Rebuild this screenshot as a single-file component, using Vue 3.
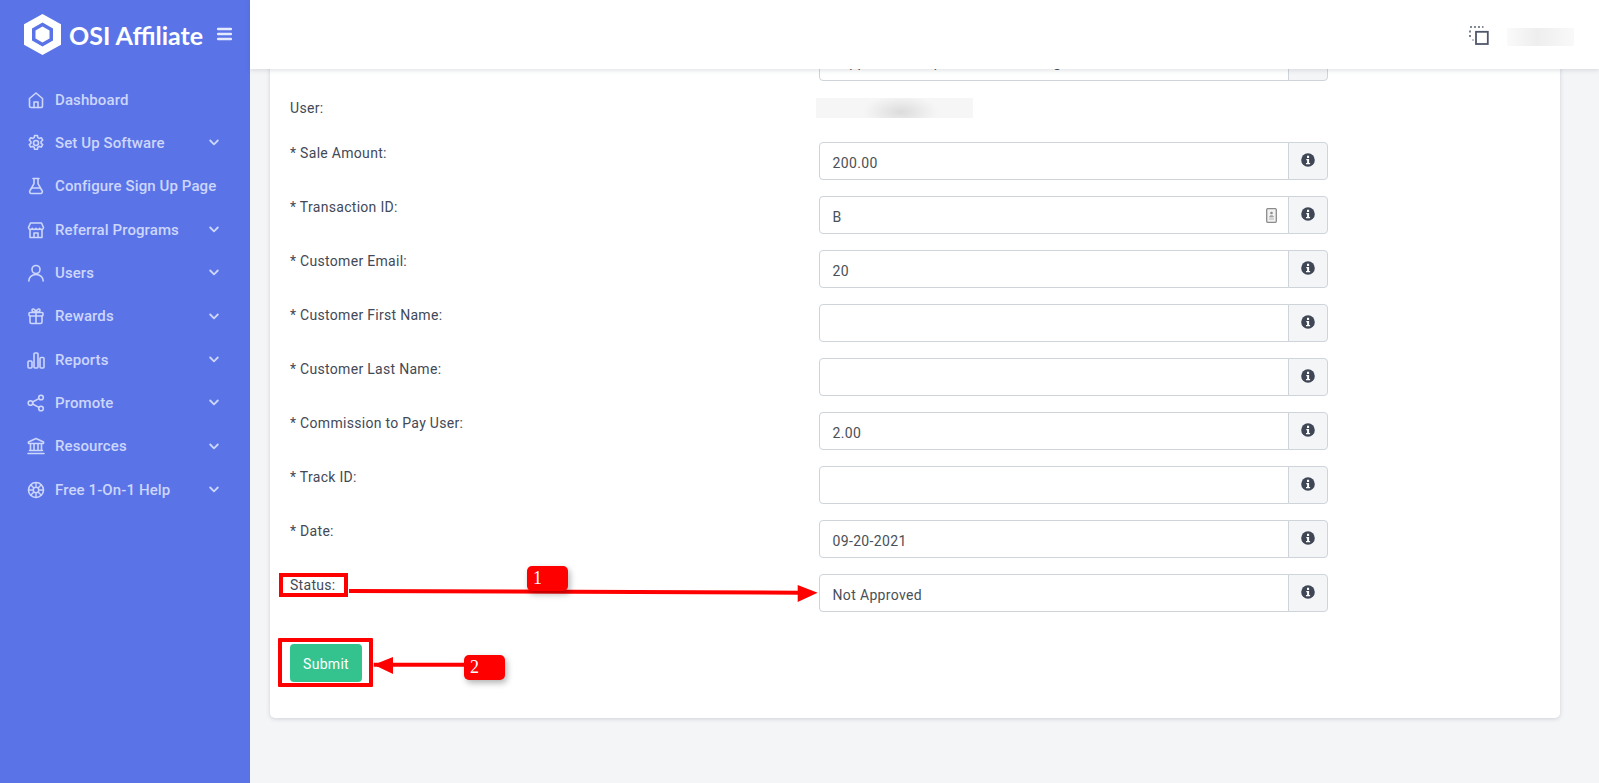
<script setup>
const menu = [
  { label: 'Dashboard', icon: 'home' },
  { label: 'Set Up Software', icon: 'gear', more: true },
  { label: 'Configure Sign Up Page', icon: 'flask' },
  { label: 'Referral Programs', icon: 'store', more: true },
  { label: 'Users', icon: 'user', more: true },
  { label: 'Rewards', icon: 'gift', more: true },
  { label: 'Reports', icon: 'bars', more: true },
  { label: 'Promote', icon: 'share', more: true },
  { label: 'Resources', icon: 'bank', more: true },
  { label: 'Free 1-On-1 Help', icon: 'help', more: true }
]
const rows = [
  { label: '* Sale Amount:', value: '200.00' },
  { label: '* Transaction ID:', value: 'B', contact: true },
  { label: '* Customer Email:', value: '20' },
  { label: '* Customer First Name:', value: '' },
  { label: '* Customer Last Name:', value: '' },
  { label: '* Commission to Pay User:', value: '2.00' },
  { label: '* Track ID:', value: '' },
  { label: '* Date:', value: '09-20-2021' }
]
</script>

<template>
  <div class="page">
    <aside class="sidebar">
      <div class="brand">
        <svg class="logo" viewBox="0 0 37 41" aria-hidden="true">
          <path fill="#fff" fill-rule="evenodd" d="M18.500 0 37 10.200v20.600L18.500 41 0 30.800V10.200ZM18.500 8.500 8 14.500v12l10.500 6 10.500-6v-12Z" />
          <path fill="#fff" d="M18.500 12.500 25.500 16.500v8L18.500 28.500 11.500 24.500v-8Z" />
        </svg>
        <span class="brand-name">OSI Affiliate</span>
        <svg class="burger" viewBox="0 0 15 14" aria-hidden="true">
          <path d="M1 2h13M1 7h13M1 12h13" stroke="currentColor" stroke-width="2.400" stroke-linecap="round" />
        </svg>
      </div>
      <nav class="menu">
        <a v-for="item in menu" :key="item.label" class="menu-item">
          <svg class="mi" viewBox="0 0 18 18" fill="none" stroke="currentColor" stroke-width="1.600" stroke-linecap="round" stroke-linejoin="round" aria-hidden="true">
            <template v-if="item.icon === 'home'">
              <path d="M2.500 7.500 9 2l6.500 5.500V15a1.500 1.500 0 0 1-1.500 1.500H4A1.500 1.500 0 0 1 2.500 15Z" />
              <path d="M7 16.500V11h4v5.500" />
            </template>
            <template v-else-if="item.icon === 'gear'">
              <circle cx="9" cy="9" r="2.500" />
              <path d="M7.600 1.500h2.800l.4 2.100 1.500.8 2-.7 1.400 2.400-1.600 1.400v1.800l1.600 1.400-1.400 2.400-2-.7-1.500.8-.4 2.100H7.600l-.4-2.100-1.500-.8-2 .7-1.400-2.400 1.600-1.400V7.500L2.300 6.100l1.400-2.400 2 .7 1.500-.8Z" />
            </template>
            <template v-else-if="item.icon === 'flask'">
              <path d="M6 1.500h6M7 1.500v5.200L2.800 14a1.700 1.700 0 0 0 1.500 2.500h9.400a1.700 1.700 0 0 0 1.500-2.500L11 6.700V1.500" />
              <path d="M5 11h8" />
            </template>
            <template v-else-if="item.icon === 'store'">
              <path d="M3.500 2h11l2 4.500a2 2 0 0 1-3.800.8 2.100 2.100 0 0 1-3.700 0 2.100 2.100 0 0 1-3.700 0 2 2 0 0 1-3.800-.8Z" />
              <path d="M3 9v7.500h12V9M7 16.500V12h4v4.500" />
            </template>
            <template v-else-if="item.icon === 'user'">
              <circle cx="9" cy="5.500" r="4" />
              <path d="M1.800 17c0-3.800 3-6.500 7.200-6.500s7.200 2.700 7.200 6.500" />
            </template>
            <template v-else-if="item.icon === 'gift'">
              <rect x="2" y="5.500" width="14" height="3.500" rx="1" />
              <path d="M3 9v6a1.500 1.500 0 0 0 1.500 1.500h9A1.500 1.500 0 0 0 15 15V9M9 5.500v11M9 5.500C7 5.500 5 4.500 5 3s3-2 4 2.500C10 1 13 1.500 13 3s-2 2.500-4 2.500Z" />
            </template>
            <template v-else-if="item.icon === 'bars'">
              <rect x="1" y="10" width="4" height="7" rx="1" />
              <rect x="7" y="2" width="4" height="15" rx="1" />
              <rect x="13" y="6.500" width="4" height="10.500" rx="1" />
            </template>
            <template v-else-if="item.icon === 'share'">
              <circle cx="3.500" cy="9" r="2.300" />
              <circle cx="14" cy="3.500" r="2.300" />
              <circle cx="14" cy="14.500" r="2.300" />
              <path d="m5.600 8 6.300-3.400M5.600 10l6.300 3.400" />
            </template>
            <template v-else-if="item.icon === 'bank'">
              <path d="M9 1.500 16.500 5v1.500h-15V5ZM3.500 7v6.500M7 7v6.500M11 7v6.500M14.500 7v6.500M2.500 13.500h13M1 16.500h16" />
            </template>
            <template v-else>
              <circle cx="9" cy="9" r="7.500" />
              <circle cx="9" cy="9" r="2.800" />
              <path d="M9 1.800v3.500M9 12.700v3.500M1.800 9h3.500M12.700 9h3.500M3.900 3.900l2.500 2.500M14.100 3.900l-2.500 2.500M3.900 14.100l2.500-2.500M14.100 14.100l-2.500-2.500" stroke-width="1.400" />
            </template>
          </svg>
          <span class="ml">{{ item.label }}</span>
          <svg v-if="item.more" class="chev" viewBox="0 0 10 7" aria-hidden="true">
            <path d="m1.200 1.500 3.800 3.800 3.800-3.800" fill="none" stroke="currentColor" stroke-width="1.800" stroke-linecap="round" stroke-linejoin="round" />
          </svg>
        </a>
      </nav>
    </aside>

    <div class="main">
      <header class="topbar">
        <svg class="screen" viewBox="0 0 20 19" aria-hidden="true">
          <path d="M1 1h2M5 1h2M9 1h2M13 1h1.500M1 4.500v2M1 9v2M1 13h.1M3.500 14h1" fill="none" stroke="#5b6172" stroke-width="1.600" />
          <rect x="7" y="5.800" width="11.800" height="12.200" fill="none" stroke="#50566a" stroke-width="1.800" />
        </svg>
        <div class="blur-wrap account"><div class="smudge"></div></div>
      </header>
      <div class="content">
        <section class="card">
          <div class="row clipped">
            <div class="label"></div>
            <div class="field">
              <div class="input"><span class="hidden-text">Support Desk Update Link Tracking</span></div>
              <div class="addon"></div>
            </div>
          </div>
          <div class="row user-row">
            <div class="label">User:</div>
            <div class="blur-wrap user-name"><div class="smudge"></div></div>
          </div>
          <div v-for="r in rows" :key="r.label" class="row">
            <div class="label">{{ r.label }}</div>
            <div class="field">
              <div class="input">
                <span class="value">{{ r.value }}</span>
                <svg v-if="r.contact" class="contact" viewBox="0 0 11 15" aria-hidden="true">
                  <rect x="0.700" y="0.700" width="9.600" height="13.600" rx="1" fill="#f2f2f2" stroke="#8b8b8b" stroke-width="1.300" />
                  <circle cx="5.500" cy="5" r="1.300" fill="#8b8b8b" />
                  <path d="M3.500 9c0-2 4-2 4 0ZM3 11h5" fill="#8b8b8b" stroke="#b5b5b5" />
                </svg>
              </div>
              <div class="addon">
                <svg class="info" viewBox="0 0 14 14" aria-hidden="true">
                  <circle cx="7" cy="7" r="6.800" fill="#3f4656" />
                  <path d="M6 2.800h2.100v2.100H6ZM5.300 5.900h2.800v4.100h1v1.300H5V10h1.100V7.200h-.8Z" fill="#fff" />
                </svg>
              </div>
            </div>
          </div>
          <div class="row status-row">
            <div class="label"><span class="status">Status:</span></div>
            <div class="field">
              <div class="input"><span class="value">Not Approved</span></div>
              <div class="addon">
                <svg class="info" viewBox="0 0 14 14" aria-hidden="true">
                  <circle cx="7" cy="7" r="6.800" fill="#3f4656" />
                  <path d="M6 2.800h2.100v2.100H6ZM5.300 5.900h2.800v4.100h1v1.300H5V10h1.100V7.200h-.8Z" fill="#fff" />
                </svg>
              </div>
            </div>
          </div>
          <div class="actions">
            <button class="submit" type="button">Submit</button>
          </div>
        </section>
      </div>

      <!-- Annotations painted over the page -->
      <svg class="marks" viewBox="0 0 1349 783" aria-hidden="true">
        <path d="M99 591 550 592.700" stroke="#f00" stroke-width="4" />
        <path d="M567.600 592.700 547.700 585v17Z" fill="#f00" />
        <path d="M214 664.700H123.700" stroke="#f00" stroke-width="4" />
        <path d="M123.700 664.700 143 657v17Z" fill="#f00" />
      </svg>
      <div class="submit-ring"></div>
      <div class="badge badge-one">1</div>
      <div class="badge badge-two">2</div>
    </div>
  </div>
</template>

<style>
html, body { margin: 0; padding: 0; }
</style>

<style scoped>
.page {
  display: flex;
  width: 1599px;
  height: 783px;
  overflow: hidden;
  background: #f4f5f7;
  font-family: Roboto, "Liberation Sans", sans-serif;
  color: #495057;
}
.sidebar {
  flex: 0 0 250px;
  background: #5a74e8;
  color: #cdd6fb;
}
.brand {
  display: flex;
  align-items: center;
  height: 70px;
  padding-left: 24px;
}
.logo { width: 37px; height: 41px; margin-top: -1px; }
.brand-name {
  margin-left: 8px;
  color: #fff;
  font: 700 25px/1 Lato, "Open Sans", sans-serif;
  width: 147px;
  white-space: nowrap;
}
.burger { width: 15px; height: 14px; color: #e4e9fd; margin-left: 1px; margin-top: -2px; }
.menu { display: flex; flex-direction: column; padding-top: 8px; }
.menu-item {
  display: flex;
  align-items: center;
  height: 43.340px;
  padding-left: 27px;
  font-size: 15px;
  font-weight: 500;
  letter-spacing: .1px;
  white-space: nowrap;
}
.mi { width: 18px; height: 18px; flex: none; }
.ml { margin-left: 10px; }
.chev { width: 10px; height: 7px; margin-left: auto; margin-right: 31px; }
.main { flex: 1; position: relative; min-width: 0; display: flex; flex-direction: column; }
.topbar {
  flex: 0 0 69px;
  z-index: 2;
  background: #fff;
  box-shadow: 0 1px 5px rgba(60, 70, 90, .18);
  display: flex;
  align-items: center;
  justify-content: flex-end;
  padding-right: 25px;
}
.screen { width: 20px; height: 19px; margin-right: 18px; margin-top: 1px; }
.blur-wrap { overflow: hidden; background: #fbfbfb; }
.account { width: 67px; height: 18px; margin-top: 5px; }
.account .smudge { background: linear-gradient(90deg, #fafafa 0, #eeeeee 45%, #f2f2f2 65%, #f9f9f9 100%); }
.smudge { width: 100%; height: 100%; background: radial-gradient(ellipse 24% 85% at 54% 70%, #dcdcdc 0, #efefef 70%, #f6f6f6 100%); }
.content { flex: 1; overflow: hidden; padding: 0 39px 0 20px; }
.card {
  background: #fff;
  border-radius: 0 0 5px 5px;
  box-shadow: 0 1px 4px rgba(60, 70, 90, .2);
  margin-top: -26px;
  padding: 0 20px;
  height: 675px;
  box-sizing: border-box;
}
.row { display: flex; align-items: flex-start; height: 38px; margin-bottom: 16px; }
.label {
  flex: 0 0 529px;
  font-size: 14px;
  line-height: 21px;
  padding-top: 1px;
  letter-spacing: .3px;
  color: #424957;
  position: relative;
}
.field { display: flex; width: 509px; height: 38px; }
.input {
  flex: 1;
  display: flex;
  align-items: center;
  justify-content: space-between;
  box-sizing: border-box;
  padding: 0 12.500px;
  border: 1px solid #ced4da;
  border-radius: 4px 0 0 4px;
  font-size: 14px;
  letter-spacing: .35px;
  color: #495057;
  background: #fff;
}
.value { margin-top: 3px; }
.hidden-text { white-space: nowrap; }
.addon {
  flex: 0 0 40px;
  display: flex;
  align-items: center;
  justify-content: center;
  box-sizing: border-box;
  border: 1px solid #ced4da;
  border-radius: 0 4px 4px 0;
  background: #f4f5f7;
  margin-left: -1px;
}
.info { width: 14px; height: 14px; margin: 0 1px 2px 0; }
.contact { width: 11px; height: 15px; margin-right: -1px; }
.user-row { height: 20px; align-items: center; margin-bottom: 24px; margin-top: 17px; }
.user-row .label { padding-top: 0; }
.user-name { width: 157px; height: 20px; margin-left: -3px; }
.status {
  display: inline-block;
  margin: -2px 0 0 -11px;
  padding: 0 8px 0 7px;
  border: 4px solid #f00;
  line-height: 16px;
  vertical-align: top;
}
.status-row { margin-bottom: 32px; }
.actions { display: flex; }
.submit {
  width: 72px;
  height: 38px;
  border: 0;
  border-radius: 4px;
  background: #34c38f;
  color: #fff;
  font: 400 14px Roboto, sans-serif;
  letter-spacing: .3px;
  padding-top: 2px;
}
.marks { position: absolute; inset: 0; width: 1349px; height: 783px; z-index: 3; pointer-events: none; }
.submit-ring {
  position: absolute;
  left: 28px;
  top: 638px;
  width: 87px;
  height: 41px;
  border: 4px solid #f00;
  border-radius: 1px;
  z-index: 3;
}
.badge {
  position: absolute;
  z-index: 4;
  width: 41px;
  height: 25px;
  border-radius: 5px;
  background: #f00;
  color: #fff;
  font: 400 18px/25px "Liberation Serif", serif;
  padding-left: 6px;
  box-sizing: border-box;
  box-shadow: 2px 3px 6px rgba(0, 0, 0, .3);
}
.badge-one { left: 277px; top: 566px; }
.badge-two { left: 214px; top: 655px; }
</style>
